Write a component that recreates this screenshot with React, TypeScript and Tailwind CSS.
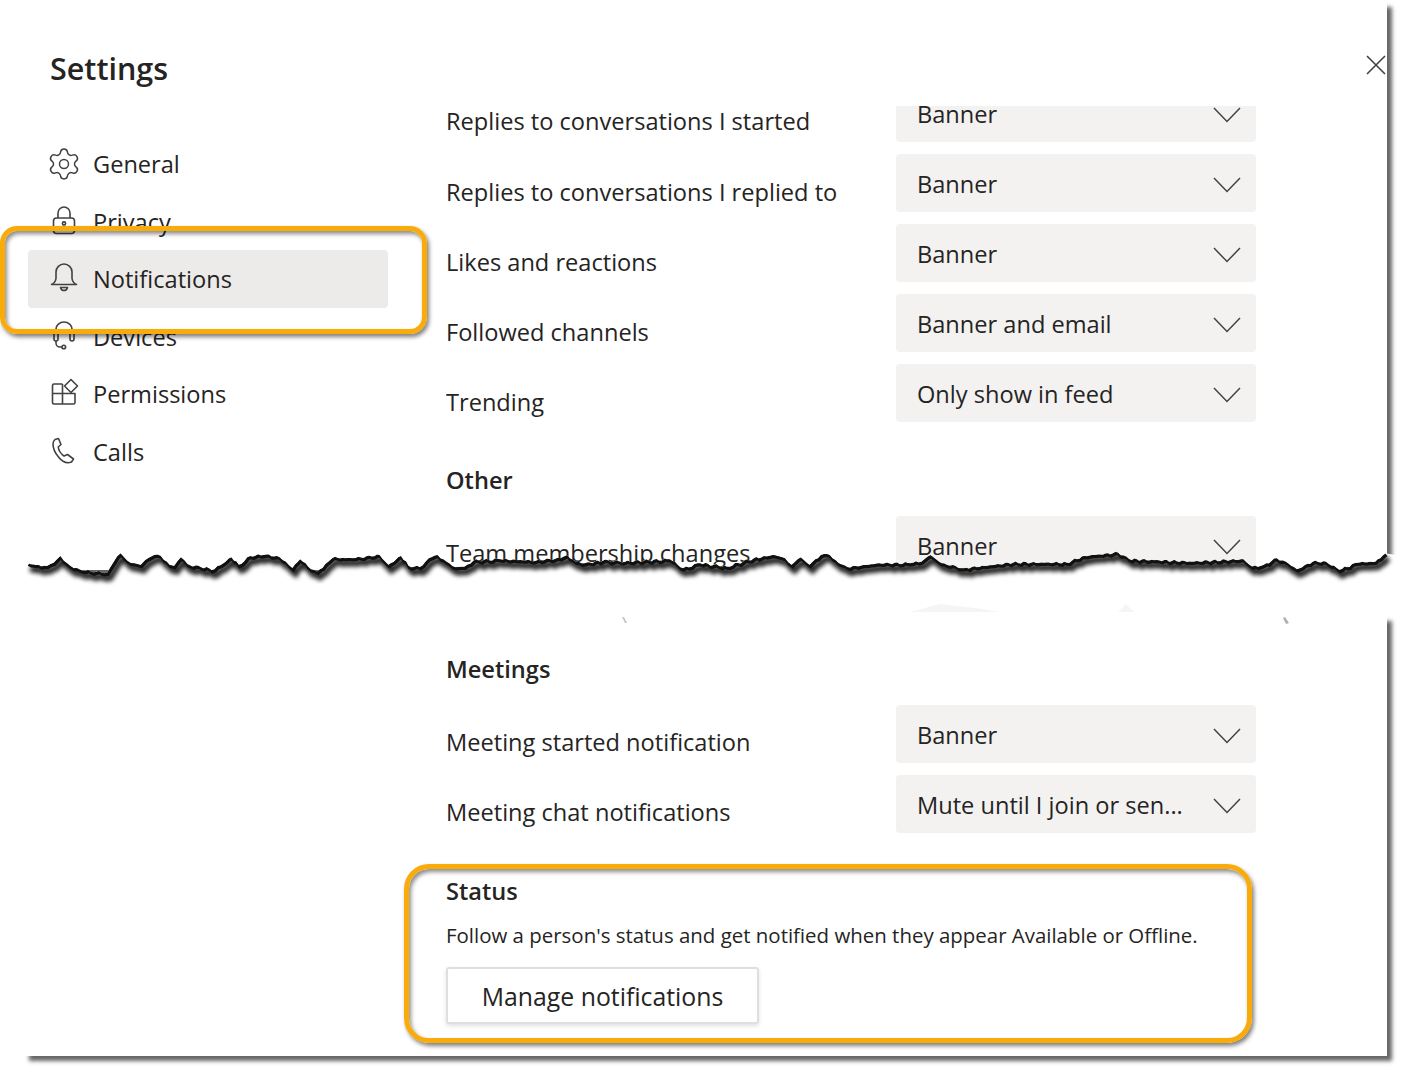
import { Settings } from "lucide-react";
import type { ReactNode } from "react";

const ink = "#424242";

const GearIcon = () => <Settings className="w-[36px] h-[36px] -m-[2px]" color={ink} strokeWidth={1} />;

const LockIcon = () => (
  <svg width="32" height="32" viewBox="0 0 32 32" fill="none" stroke={ink} strokeWidth="1.6">
    <rect x="5.5" y="13" width="21" height="15.5" rx="3" />
    <path d="M10 13V8a6 6 0 0 1 12 0v5" />
    <circle cx="16" cy="18.5" r="1.6" />
    <path d="M5.5 24h21" />
  </svg>
);

const BellIcon = () => (
  <svg width="32" height="32" viewBox="0 0 32 32" fill="none" stroke={ink} strokeWidth="1.6" strokeLinejoin="round">
    <path d="M3.5 21.5h25c-2-1-4-2.5-4.5-6V9a8 8 0 0 0-16 0v6.5c-.5 3.5-2.5 5-4.5 6z" />
    <path d="M12.5 24.5h7c-.5 2-1.700 3-3.500 3s-3-1-3.500-3z" />
  </svg>
);

const HeadsetIcon = () => (
  <svg width="32" height="32" viewBox="0 0 32 32" fill="none" stroke={ink} strokeWidth="1.6">
    <path d="M8 11V8a8 7 0 0 1 16 0v3" />
    <rect x="6" y="11" width="4" height="9" rx="2" />
    <rect x="22" y="11" width="4" height="9" rx="2" />
    <path d="M8 20v2a4 4 0 0 0 4 4h2" />
    <circle cx="15.800" cy="26" r="1.800" />
  </svg>
);

const PermissionsIcon = () => (
  <svg width="32" height="32" viewBox="0 0 32 32" fill="none" stroke={ink} strokeWidth="1.6" strokeLinejoin="round">
    <path d="M14.500 6H6a1.500 1.500 0 0 0-1.500 1.500v17A1.500 1.500 0 0 0 6 26h19.500a1.500 1.500 0 0 0 1.500-1.500V15.500H4.500M14.500 6v20" />
    <path d="M23 1.500L29.500 8 23 14.500 16.500 8z" />
  </svg>
);

const PhoneIcon = () => (
  <svg width="32" height="32" viewBox="0 0 32 32" fill="none" stroke={ink} strokeWidth="1.6" strokeLinejoin="round">
    <path d="M7 3.500l3.500-1 2.500 6-2.800 2.500c.5 3.500 3 7 5.800 9l3.500-1.500 6 4.500-2 3c-5 2-9.500-.5-13-5C7 17 5 12.500 5 8c0-2 .8-3.500 2-4.500z" />
  </svg>
);

const Chevron = () => (
  <svg className="mt-[4px]" width="28" height="16" viewBox="0 0 28 16" fill="none" stroke={ink} strokeWidth="1.5">
    <polyline points="1,1 14,14.500 27,1" />
  </svg>
);

const NavItem = ({ icon, label, active }: { icon: ReactNode; label: string; active?: boolean }) => (
  <div className={`flex items-center h-[57.6px] pl-[20px] gap-[13px] rounded-[4px] ${active ? "bg-[#edebe9]" : ""}`}>
    {icon}
    <span className="pt-[2px]">{label}</span>
  </div>
);

const Row = ({ label, value, labelTop = "pt-[22px]" }: { label: string; value: string; labelTop?: string }) => (
  <div className="flex mb-[12px]">
    <div className={`w-[450px] h-[58px] leading-[32px] ${labelTop}`}>{label}</div>
    <div className="w-[360px] h-[58px] bg-[#f3f2f1] rounded-[4px] flex items-center justify-between pl-[21px] pr-[15px]">
      <span className="leading-[32px] pt-[1px]">{value}</span>
      <Chevron />
    </div>
  </div>
);

// tear outline, read off the reference: zoom x/y converted back to page pixels
const leftTear = [
  [62, 128], [80, 135], [105, 138], [120, 128], [135, 108], [150, 130], [165, 145], [185, 152], [215, 155], [240, 158],
  [255, 125], [270, 100], [285, 122], [300, 130], [315, 135], [325, 120], [345, 105], [360, 108], [380, 135], [390, 138],
  [405, 112], [420, 133], [450, 142], [480, 148], [500, 130], [518, 112], [535, 135], [560, 108], [590, 105], [620, 108],
  [640, 125], [655, 145], [672, 118], [690, 140], [710, 155], [735, 125], [745, 113], [790, 115], [850, 105], [870, 135],
  [898, 108], [915, 138], [940, 142], [960, 115], [980, 105], [1000, 125], [1020, 142], [1040, 140], [1060, 122], [1120, 118],
  [1200, 122], [1255, 115], [1270, 105], [1290, 125], [1310, 130], [1350, 122], [1400, 125], [1500, 118], [1530, 145],
].map(([x, y]) => [(x * 700) / 1568, 520 + y / 3]);

const rightTear = [
  [0, 130], [60, 140], [120, 115], [165, 105], [190, 115], [205, 135], [225, 112], [245, 135], [270, 105], [290, 105],
  [310, 130], [330, 142], [400, 130], [470, 130], [495, 125], [515, 105], [540, 130], [590, 145], [700, 128], [820, 128],
  [860, 108], [935, 98], [960, 118], [1100, 125], [1215, 118], [1235, 140], [1260, 135], [1290, 115], [1310, 125], [1335, 148],
  [1370, 125], [1400, 125], [1430, 150], [1470, 128], [1510, 125], [1533, 100],
].map(([x, y]) => [700 + (x * 701) / 1568, 520 + y / 3]);

// fine teeth between the traced points, the reference edge is rough
const roughen = (points: number[][]) => {
  const out: number[][] = [];
  points.forEach(([x, y], i) => {
    out.push([x, y]);
    const next = points[i + 1];
    if (!next) return;
    const steps = Math.floor((next[0] - x) / 2.5);
    for (let s = 1; s < steps; s++) {
      const t = s / steps;
      const px = x + (next[0] - x) * t;
      const noise = Math.sin(px * 1.7) * 0.7 + Math.sin(px * 0.63) * 0.6;
      out.push([px, y + (next[1] - y) * t + noise]);
    }
  });
  return out;
};

const tearPoints = roughen([...leftTear, ...rightTear]);
const tearLine = tearPoints.map(([x, y]) => `${x.toFixed(1)},${y.toFixed(1)}`).join(" ");
const tearArea = `0,${tearPoints[0][1]} ${tearLine} 1401,556 1401,612 0,612`;

const TornEdge = () => (
  <svg className="absolute left-0 top-0 pointer-events-none" width="1401" height="640" viewBox="0 0 1401 640" fill="none">
    <defs>
      <filter id="tearBlur" x="-5%" y="-200%" width="110%" height="500%">
        <feGaussianBlur stdDeviation="2.2" />
      </filter>
      <clipPath id="tearClip">
        <polygon points={tearArea} />
      </clipPath>
    </defs>
    <polygon points={tearArea} fill="#ffffff" />
    <g clipPath="url(#tearClip)">
      <polyline points={tearLine} stroke="#000000" strokeOpacity="0.85" strokeWidth="7" filter="url(#tearBlur)" transform="translate(3 5)" />
      <polyline points={tearLine} stroke="#111111" strokeWidth="3.5" transform="translate(1 1.500)" />
    </g>
    <polygon points="910,612 940,604 975,608 1000,612" fill="#f6f5f4" />
    <polygon points="1118,612 1126,604 1134,612" fill="#f6f5f4" />
    <polygon points="622,617 624,617 627,623 625,623" fill="#c4c4c4" />
    <polygon points="1283,618 1285,617 1289,623 1286,624" fill="#b0b0b0" />
  </svg>
);

const frameClass =
  "absolute border-[5px] border-[#f9ab0a] pointer-events-none shadow-[2px_3px_4px_rgba(0,0,0,0.5),inset_2px_3px_4px_rgba(0,0,0,0.45)]";

export default function App() {
  return (
    <div
      className="relative w-[1401px] h-[1071px] overflow-hidden bg-white text-[#252423] text-[23.6px]"
      style={{ fontFamily: '"Open Sans", "Noto Sans", sans-serif' }}
    >
      <div className="ml-[24px] w-[1363px] h-[570px] flex bg-white shadow-[5px_7px_4px_rgba(0,0,0,0.6)]">
        <aside className="w-[422px] shrink-0">
          <h1 className="pl-[26px] pt-[46px] h-[135px] text-[30.5px] leading-[44px] font-semibold">Settings</h1>
          <nav className="ml-[4px] w-[360px]">
            <NavItem icon={<GearIcon />} label="General" />
            <NavItem icon={<LockIcon />} label="Privacy" />
            <NavItem icon={<BellIcon />} label="Notifications" active />
            <NavItem icon={<HeadsetIcon />} label="Devices" />
            <NavItem icon={<PermissionsIcon />} label="Permissions" />
            <NavItem icon={<PhoneIcon />} label="Calls" />
          </nav>
        </aside>
        <main className="mt-[106px] w-[810px] h-[464px] overflow-hidden shrink-0">
          <div className="-mt-[22px]">
            <Row label="Replies to conversations I started" value="Banner" labelTop="pt-[21px]" />
            <Row label="Replies to conversations I replied to" value="Banner" />
            <Row label="Likes and reactions" value="Banner" />
            <Row label="Followed channels" value="Banner and email" />
            <Row label="Trending" value="Only show in feed" />
            <h2 className="mt-[42px] mb-[20px] leading-[32px] font-semibold">Other</h2>
            <Row label="Team membership changes" value="Banner" labelTop="pt-[21px]" />
          </div>
        </main>
        <div className="ml-[110px] pt-[55px]">
          <svg width="20" height="20" viewBox="0 0 20 20" fill="none" stroke={ink} strokeWidth="1.6">
            <path d="M1 1l18 18M19 1L1 19" />
          </svg>
        </div>
      </div>

      <div className="relative mt-[46px] ml-[24px] w-[1363px] h-[440px] bg-white pl-[422px] pt-[37px] shadow-[5px_5px_4px_rgba(0,0,0,0.6)]">
        <h2 className="mb-[20px] leading-[32px] font-semibold">Meetings</h2>
        <Row label="Meeting started notification" value="Banner" labelTop="pt-[21px]" />
        <Row label="Meeting chat notifications" value="Mute until I join or sen..." labelTop="pt-[21px]" />
        <h2 className="mt-[42px] leading-[32px] font-semibold">Status</h2>
        <p className="mt-[14px] text-[20.45px] leading-[28px]">
          Follow a person's status and get notified when they appear Available or Offline.
        </p>
        <button className="mt-[18px] w-[313px] h-[57px] pt-[3px] bg-white border-2 border-[#e1dfdd] rounded-[3px] font-medium text-[24.8px] shadow-[0_2px_4px_rgba(0,0,0,0.12)]">
          Manage notifications
        </button>
      </div>

      <TornEdge />
      <div className={`${frameClass} left-0 top-[226px] w-[427px] h-[108px] rounded-[17px]`} />
      <div className={`${frameClass} left-[404px] top-[864px] w-[848px] h-[179px] rounded-[25px]`} />
    </div>
  );
}
